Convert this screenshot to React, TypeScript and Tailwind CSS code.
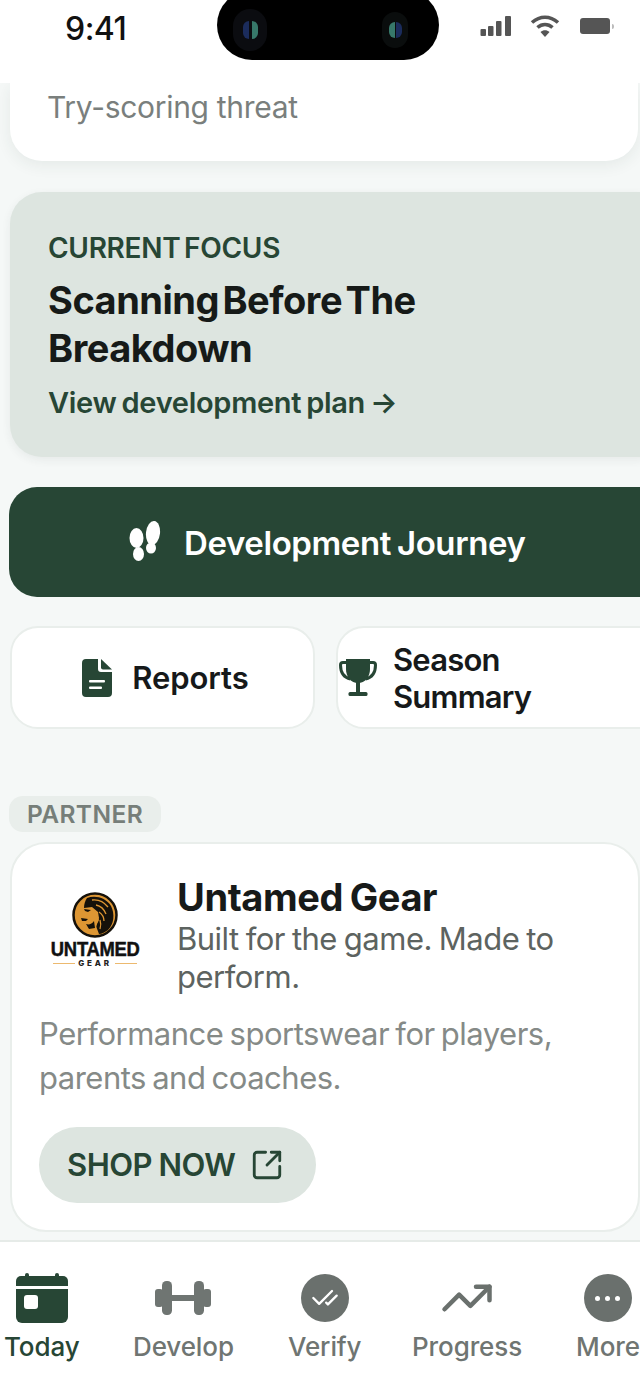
import React from 'react';
import { SquareArrowOutUpRight, TrendingUp, CheckCheck } from 'lucide-react';

const GREEN = '#274635';

function StatusBar() {
  return (
    <div className="relative h-[83px] shrink-0 bg-white z-10">
      <span className="absolute left-[65px] top-[10px] text-[32px] leading-[38px] text-[#111] font-medium tracking-[-0.5px]">9:41</span>
      {/* dynamic island */}
      <div className="absolute left-[217px] top-[-10px] w-[222px] h-[70px] rounded-[35px] bg-black flex items-center justify-between pl-[16px] pr-[31px] pt-[10px]">
        <div className="w-[34px] h-[42px] rounded-full bg-[#0b0c10] flex items-center justify-center gap-[3px]">
          <span className="w-[6px] h-[18px] rounded-l-full bg-[#1b2c5c]" />
          <span className="w-[6px] h-[18px] rounded-r-full bg-[#37786a]" />
        </div>
        <div className="w-[26px] h-[36px] rounded-full bg-[#0a0d0d] flex items-center justify-center gap-[1px]">
          <span className="w-[6px] h-[16px] rounded-l-full bg-[#37786a]" />
          <span className="w-[6px] h-[16px] rounded-r-full bg-[#1b2c5c]" />
        </div>
      </div>
      <svg className="absolute left-[480px] top-[16px]" width="34" height="21" viewBox="0 0 34 21" fill="#555">
        <rect x="0.5" y="13" width="5.5" height="7" rx="1" />
        <rect x="8" y="10" width="5.5" height="10" rx="1" />
        <rect x="16" y="5" width="5.5" height="15" rx="1" />
        <rect x="25" y="0" width="6" height="20" rx="1" />
      </svg>
      <svg className="absolute left-[529px] top-[14px]" width="32" height="24" viewBox="0 0 32 24" fill="none" stroke="#555" strokeWidth="3.6">
        <path d="M3 8.5C11 1.5 21 1.5 29 8.5" />
        <path d="M8.5 13.5C13 9.5 19 9.5 23.5 13.5" />
        <path d="M16 23l-4.5-5c2.700-2.200 6.300-2.200 9 0z" fill="#555" stroke="none" />
      </svg>
      <div className="absolute left-[580px] top-[18px] w-[30px] h-[16px] rounded-[3px] bg-[#555]" />
      <div className="absolute left-[612px] top-[24px] w-[2px] h-[5px] rounded-r-full bg-[#bbb]" />
    </div>
  );
}

function FootIcon() {
  return (
    <svg width="38" height="42" viewBox="0 0 36 42" fill="#fff">
      <ellipse cx="8.500" cy="17" rx="7" ry="10" />
      <ellipse cx="10.500" cy="33" rx="5.500" ry="7" />
      <ellipse cx="25" cy="12" rx="7" ry="12" transform="rotate(6 25 12)" />
      <ellipse cx="23" cy="27" rx="5" ry="5.500" />
    </svg>
  );
}

function FileIcon() {
  return (
    <svg width="30" height="38" viewBox="0 0 30 38" className="shrink-0">
      <path d="M4 0h12v10a3 3 0 0 0 3 3h11v21a4 4 0 0 1-4 4H4a4 4 0 0 1-4-4V4a4 4 0 0 1 4-4z" fill={GREEN} />
      <path d="M19 0l11 10.500H21a2 2 0 0 1-2-2z" fill={GREEN} />
      <rect x="7" y="21" width="16" height="2.500" rx="1" fill="#fff" />
      <rect x="7" y="27.500" width="13" height="2.500" rx="1" fill="#fff" />
    </svg>
  );
}

function TrophyIcon() {
  return (
    <svg width="38" height="38" viewBox="0 0 38 38" className="shrink-0">
      <path d="M8 3.500H4a2.500 2.500 0 0 0-2.500 2.500c0 7 3 12.500 10 14" fill="none" stroke={GREEN} strokeWidth="3" />
      <path d="M30 3.500h4A2.500 2.500 0 0 1 36.500 6c0 7-3 12.500-10 14" fill="none" stroke={GREEN} strokeWidth="3" />
      <path d="M7 0h24v10c0 8-5 14-12 14S7 18 7 10z" fill={GREEN} />
      <rect x="17" y="22" width="4" height="11" fill={GREEN} />
      <rect x="9.500" y="33" width="19" height="4" rx="1.500" fill={GREEN} />
    </svg>
  );
}

function LionLogo() {
  return (
    <div className="flex flex-col items-center w-[88px] shrink-0">
      <svg width="46" height="46" viewBox="0 0 46 46">
        <circle cx="23" cy="23" r="21.500" fill="#dd9633" stroke="#15110a" strokeWidth="2.500" />
        {/* mane */}
        <path d="M15 6c9-3 19 0 24 8 4 8 3 18-3 24-3 2-6 4-9 4l-3-8 3-6-2-6-6-5-7-1c0-4 1-7 3-10z" fill="#15110a" />
        <path d="M20 8c7-1 12 2 16 7M24 13c5 1 8 4 10 9M27 20c3 2 5 5 5 9M28 28c1 3 1 6 0 9" fill="none" stroke="#dd9633" strokeWidth="1.300" />
        {/* muzzle and jaw */}
        <path d="M12 16l8-1 6 5 1 6-2 5-1 5-6 1-3-4-3-1-2-4 2-2-2-4z" fill="#dd9633" />
        <path d="M12 17l7 1-3 2-3-1zM9 26l7 1-2 2-4 0zM14 32c3 1 6 0 8-3l1 7-6 1z" fill="#15110a" />
      </svg>
      <span className="mt-[2px] text-[20px] leading-[19px] font-bold text-[#111] tracking-[-0.3px] font-['Liberation_Sans',sans-serif] [-webkit-text-stroke:0.5px_#111] [transform:scaleX(0.92)] whitespace-nowrap">UNTAMED</span>
      <div className="flex items-center gap-[3px] w-[84px]">
        <div className="flex-1 h-px bg-[#ecb96f]" />
        <span className="text-[8px] leading-[9px] font-extrabold tracking-[2.800px] text-[#222]">GEAR</span>
        <div className="flex-1 h-px bg-[#ecb96f]" />
      </div>
    </div>
  );
}

function NavItem({ icon, label, active, className }: { icon: React.ReactNode; label: string; active?: boolean; className: string }) {
  return (
    <div className={`absolute top-[31px] flex flex-col items-center ${className}`}>
      <div className="h-[50px] flex items-center justify-center">{icon}</div>
      <span className={`mt-[8px] text-[26px] leading-[32px] font-medium tracking-[-0.1px] whitespace-nowrap ${active ? 'text-[#274635]' : 'text-[#6f7572]'}`}>{label}</span>
    </div>
  );
}

export default function App() {
  return (
    <div className="relative w-[640px] h-[1385px] overflow-hidden bg-[#f5f8f7] flex flex-col font-['Inter',sans-serif]">
      <StatusBar />
      <div className="flex-1 overflow-hidden pl-[10px] flex flex-col">
        {/* previous card, scrolled under the status bar */}
        <div className="h-[78px] shrink-0 w-[628px] bg-white rounded-b-[32px] shadow-[0_4px_16px_rgba(40,60,50,0.08)] pl-[37px] pt-[5px]">
          <p className="text-[30px] leading-[38px] text-[#7a7f7d] tracking-[-0.3px]">Try-scoring threat</p>
        </div>

        <div className="mt-[31px] h-[265px] shrink-0 w-[660px] bg-[#dde5e0] rounded-[32px] shadow-[0_3px_10px_rgba(40,60,50,0.07)] pl-[38px] pt-[38px]">
          <p className="text-[28px] leading-[36px] font-semibold text-[#274635] tracking-[-0.3px] [word-spacing:-3px]">CURRENT FOCUS</p>
          <p className="mt-[10px] w-[420px] text-[38px] leading-[48px] font-bold text-[#161a18] tracking-[-0.5px] [word-spacing:-5px]">Scanning Before The Breakdown</p>
          <p className="mt-[12px] text-[29px] leading-[38px] font-semibold text-[#274635] tracking-[-0.3px] [word-spacing:-2px]">View development plan →</p>
        </div>

        <div className="mt-[30px] -ml-[1px] h-[110px] shrink-0 w-[660px] bg-[#274635] rounded-[28px] flex items-center pl-[118px] gap-[19px]">
          <FootIcon />
          <span className="pt-[3px] text-[33px] font-semibold text-white tracking-[-0.4px] [word-spacing:-2px]">Development Journey</span>
        </div>

        <div className="mt-[29px] h-[103px] shrink-0 flex gap-[21px] w-[660px]">
          <div className="w-[305px] bg-white border-2 border-[#e9eeeb] rounded-[28px] flex items-center justify-center gap-[20px] pl-[6px]">
            <FileIcon />
            <span className="pt-[1px] text-[31px] font-semibold text-[#16191a] tracking-[-0.1px]">Reports</span>
          </div>
          <div className="w-[334px] bg-white border-2 border-[#e9eeeb] rounded-[28px] flex items-center pl-[1px] gap-[16px]">
            <TrophyIcon />
            <span className="w-[160px] text-[31px] leading-[37px] font-semibold text-[#16191a] tracking-[-0.8px]">Season Summary</span>
          </div>
        </div>

        <div className="mt-[67px] h-[36px] shrink-0 w-[152px] -ml-[1px] rounded-[14px] bg-[#e9eeeb] flex items-center justify-center">
          <span className="pt-[1px] text-[24.500px] font-semibold text-[#767e79] tracking-[0.4px]">PARTNER</span>
        </div>

        <div className="mt-[10px] h-[390px] shrink-0 w-[630px] bg-white border-2 border-[#e9eeeb] rounded-[36px] pl-[27px] pt-[30px]">
          <div className="flex gap-[32px]">
            <div className="pt-[18px] ml-[4px] w-[104px] shrink-0 flex justify-center"><LionLogo /></div>
            <div className="-ml-[2px]">
              <p className="text-[38px] leading-[46px] font-bold text-[#171a19] tracking-[-0.4px] [word-spacing:-2px]">Untamed Gear</p>
              <p className="w-[400px] text-[31px] leading-[38px] text-[#5d6360] tracking-[-0.5px] [word-spacing:-1.300px]">Built for the game. Made to perform.</p>
            </div>
          </div>
          <p className="mt-[16px] w-[540px] text-[31px] leading-[44px] text-[#858a87] tracking-[-0.5px] [word-spacing:-2px]">Performance sportswear for players, parents and coaches.</p>
          <div className="mt-[27px] w-[277px] h-[76px] rounded-full bg-[#dde5e0] flex items-center pl-[28px] gap-[15px]">
            <span className="text-[31px] font-semibold text-[#274635] tracking-[-0.5px] [word-spacing:-1px]">SHOP NOW</span>
            <SquareArrowOutUpRight size={34} strokeWidth={2} color={GREEN} />
          </div>
        </div>
      </div>

      {/* Bottom nav */}
      <div className="absolute left-0 right-0 bottom-0 h-[145px] bg-white border-t-2 border-[#e6ebe8]">
        <NavItem
          active
          label="Today"
          className="left-[4px]"
          icon={
            <svg width="52" height="50" viewBox="0 0 52 50">
              <path d="M5 3h42a5 5 0 0 1 5 5v5H0V8a5 5 0 0 1 5-5z" fill={GREEN} />
              <rect x="9" y="0" width="4" height="6" rx="2" fill={GREEN} />
              <rect x="39" y="0" width="4" height="6" rx="2" fill={GREEN} />
              <path d="M0 16h52v28a6 6 0 0 1-6 6H6a6 6 0 0 1-6-6z" fill={GREEN} />
              <rect x="8" y="22" width="14" height="14" rx="3" fill="#fff" />
            </svg>
          }
        />
        <NavItem
          label="Develop"
          className="left-[133px]"
          icon={
            <svg width="56" height="34" viewBox="0 0 56 34" fill="#6f7572">
              <rect x="0" y="8" width="8" height="18" rx="3" />
              <rect x="7" y="0" width="10" height="34" rx="4.500" />
              <rect x="16" y="14" width="24" height="6" />
              <rect x="39" y="0" width="10" height="34" rx="4.500" />
              <rect x="48" y="8" width="8" height="18" rx="3" />
            </svg>
          }
        />
        <NavItem
          label="Verify"
          className="left-[288px]"
          icon={
            <div className="w-[48px] h-[48px] rounded-full bg-[#6a706d] flex items-center justify-center">
              <CheckCheck size={28} color="#fff" strokeWidth={2} />
            </div>
          }
        />
        <NavItem
          label="Progress"
          className="left-[412px]"
          icon={<TrendingUp size={54} color="#6a706d" strokeWidth={2} />}
        />
        <NavItem
          label="More"
          className="left-[576px]"
          icon={
            <div className="w-[48px] h-[48px] rounded-full bg-[#6a706d] flex items-center justify-center gap-[5px]">
              <span className="w-[5px] h-[5px] rounded-full bg-white" />
              <span className="w-[5px] h-[5px] rounded-full bg-white" />
              <span className="w-[5px] h-[5px] rounded-full bg-white" />
            </div>
          }
        />
      </div>
    </div>
  );
}
